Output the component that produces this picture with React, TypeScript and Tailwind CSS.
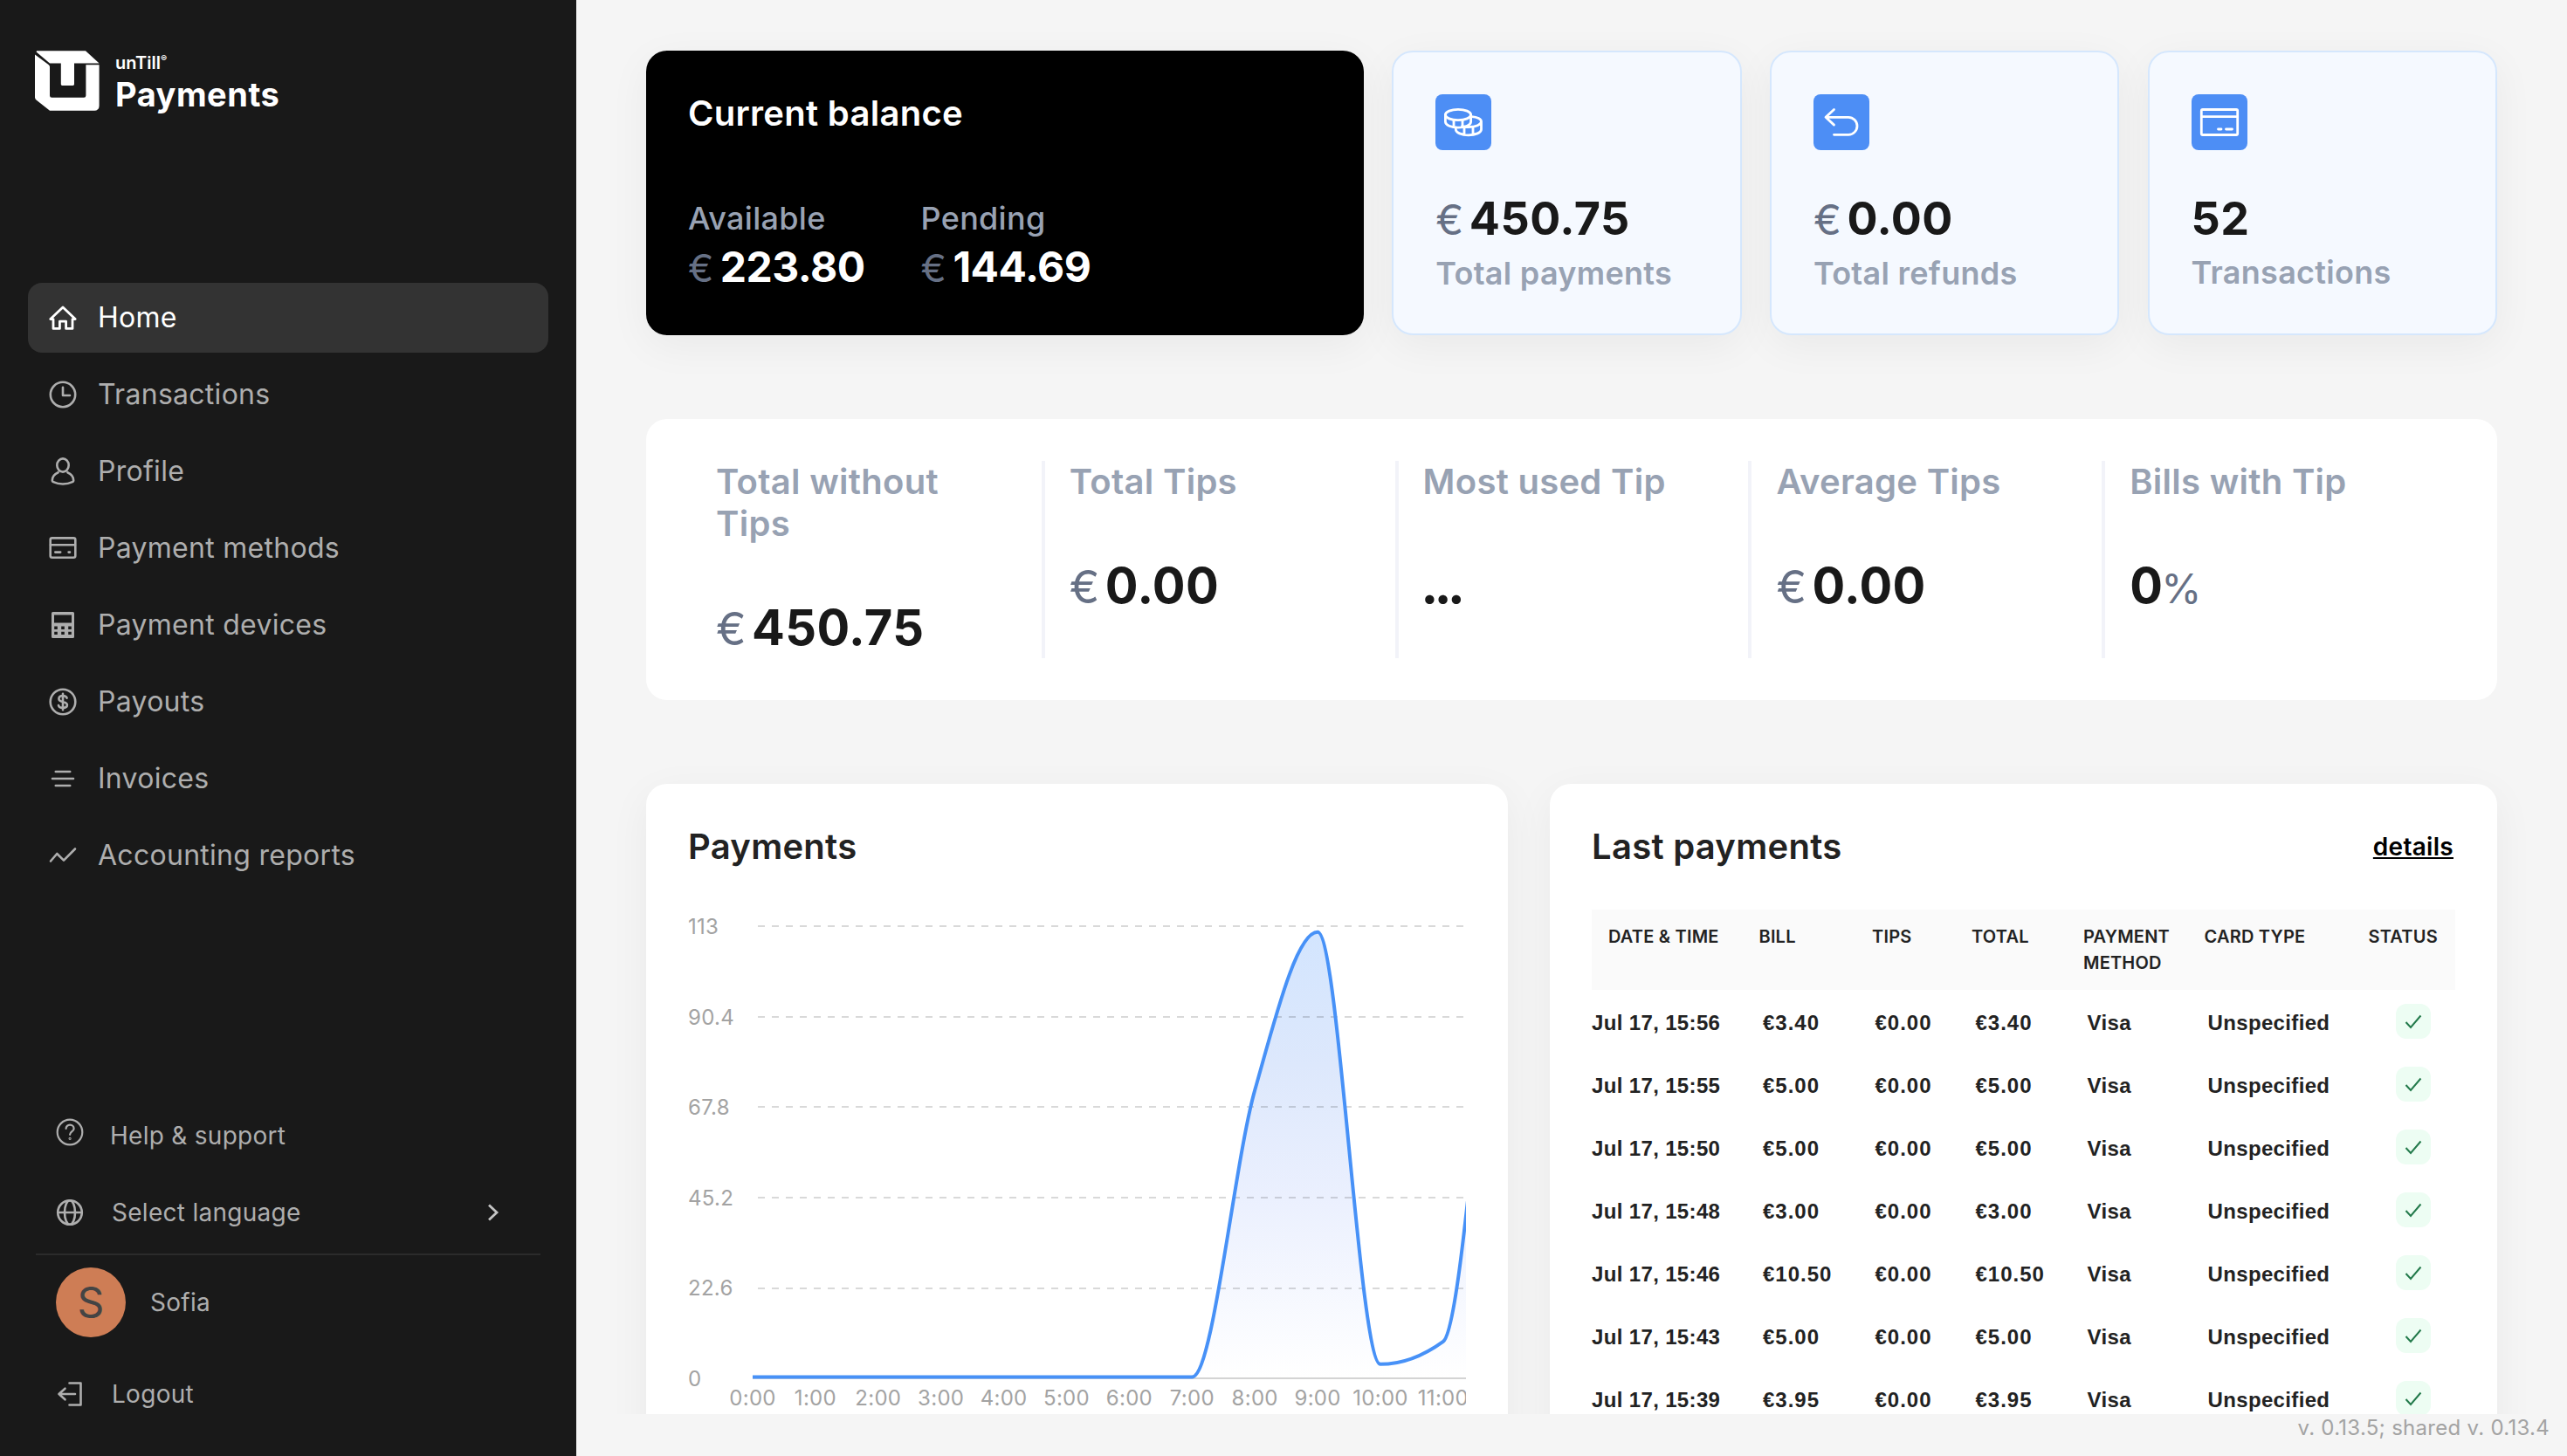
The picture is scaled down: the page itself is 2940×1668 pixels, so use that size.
import type { ReactNode } from 'react';

// ─────────────────────────────────────────────────────────────────────────────
// Data
// ─────────────────────────────────────────────────────────────────────────────

interface Payment {
  date: string;
  bill: string;
  tips: string;
  total: string;
}

const PAYMENTS: Payment[] = [
  { date: 'Jul 17, 15:56', bill: '€3.40', tips: '€0.00', total: '€3.40' },
  { date: 'Jul 17, 15:55', bill: '€5.00', tips: '€0.00', total: '€5.00' },
  { date: 'Jul 17, 15:50', bill: '€5.00', tips: '€0.00', total: '€5.00' },
  { date: 'Jul 17, 15:48', bill: '€3.00', tips: '€0.00', total: '€3.00' },
  { date: 'Jul 17, 15:46', bill: '€10.50', tips: '€0.00', total: '€10.50' },
  { date: 'Jul 17, 15:43', bill: '€5.00', tips: '€0.00', total: '€5.00' },
  { date: 'Jul 17, 15:39', bill: '€3.95', tips: '€0.00', total: '€3.95' },
];

// Turnover per hour, starting at midnight.
const HOURLY = [0, 0, 0, 0, 0, 0, 0, 0, 71.9, 111.5, 3.2, 8.9, 108, 60];
const Y_TICKS = [113, 90.4, 67.8, 45.2, 22.6, 0];

// ─────────────────────────────────────────────────────────────────────────────
// Icons
// ─────────────────────────────────────────────────────────────────────────────

function Icon({ children, width = 2.6 }: { children: ReactNode; width?: number }) {
  return (
    <svg
      className="size-8 shrink-0"
      viewBox="0 0 32 32"
      fill="none"
      stroke="currentColor"
      strokeWidth={width}
      strokeLinecap="round"
      strokeLinejoin="round"
    >
      {children}
    </svg>
  );
}

const HomeIcon = () => (
  <Icon width={2.8}>
    <path d="M16 4 1.8 17.6H5V28.4h7.4V20.2h7.2v8.2H27V17.6h3.2Z" />
  </Icon>
);

const ClockIcon = () => (
  <Icon>
    <circle cx="16" cy="16" r="14.2" />
    <path d="M16 7.8V17h8" />
  </Icon>
);

const UserIcon = () => (
  <Icon>
    <ellipse cx="16" cy="9" rx="6.7" ry="7.6" />
    <path d="M10.6 17.2C6.6 19 3.8 22.4 3.8 26.4c0 1 .5 1.400 1.300 1.800C11.500 31.300 20.500 31.300 26.900 28.200c.8-.4 1.300-.8 1.300-1.800 0-4-2.800-7.400-6.800-9.200" />
  </Icon>
);

const CardIcon = () => (
  <Icon>
    <rect x="1.7" y="4.4" width="28.6" height="22.4" rx="2" />
    <path d="M2 12.3h28M7.3 20.600h5.900M22.600 20.600h1.400" />
  </Icon>
);

const TerminalIcon = () => (
  <svg className="size-8 shrink-0" viewBox="0 0 32 32" fill="currentColor">
    <path
      fillRule="evenodd"
      d="M4.5 1h23A1.500 1.500 0 0 1 29 2.500v27a1.500 1.500 0 0 1-1.500 1.500h-23A1.500 1.500 0 0 1 3 29.500v-27A1.500 1.500 0 0 1 4.500 1ZM6 4.500v9h20v-9ZM6.200 17.500v3.400h3.600v-3.400Zm8 0v3.400h3.600v-3.400Zm8 0v3.400h3.600v-3.400Zm-16 6.200v3.400h3.600v-3.400Zm8 0v3.400h3.600v-3.400Zm8 0v3.400h3.600v-3.400Z"
    />
  </svg>
);

const DollarIcon = () => (
  <Icon>
    <circle cx="16" cy="16" r="14.3" />
    <path d="M16 6.8v18.4M20.600 11.700c-.5-1.700-2.200-2.700-4.600-2.700-2.700 0-4.600 1.300-4.600 3.400 0 2.300 2 3 4.600 3.600s4.900 1.300 4.900 3.600c0 2.200-2 3.400-4.900 3.400-2.700 0-4.600-1.100-5-3" />
  </Icon>
);

const LinesIcon = () => (
  <Icon>
    <path d="M7.8 8h16.400M4 16h24M7.800 24h16.400" />
  </Icon>
);

const TrendIcon = () => (
  <Icon>
    <path d="M2 22.5 9.300 14l7.700 7.700L30 8.500" />
  </Icon>
);

const HelpIcon = () => (
  <Icon width={2.2}>
    <circle cx="16" cy="16" r="14.3" />
    <path d="M11.6 12c0-2.500 2-4.400 4.500-4.400s4.500 1.800 4.500 4.300c0 3.300-4.500 3.300-4.500 6.900" />
    <circle cx="16.1" cy="23.3" r=".5" />
  </Icon>
);

const GlobeIcon = () => (
  <Icon>
    <circle cx="16" cy="16" r="13.8" />
    <ellipse cx="16" cy="16" rx="6" ry="13.8" />
    <path d="M2.5 16h27" />
  </Icon>
);

const LogoutIcon = () => (
  <Icon>
    <path d="M15.5 3.500h13v25h-13M3.500 16h18.500M10.500 9.700 3.500 16l7 6.300" />
  </Icon>
);

function IconTile({ children }: { children: ReactNode }) {
  return (
    <div className="size-16 rounded-lg bg-[#4d8ef5]">
      <svg
        className="size-16"
        viewBox="0 0 64 64"
        fill="none"
        stroke="white"
        strokeWidth="2.8"
        strokeLinecap="round"
        strokeLinejoin="round"
      >
        {children}
      </svg>
    </div>
  );
}

function Logo() {
  return (
    <svg className="h-[69px] w-[74px]" viewBox="0 0 74 69" fill="white">
      <path d="M2 .2h56L73.600 14.500H45v24a1.400 1.400 0 0 1-1.400 1.400H31.200a1.400 1.400 0 0 1-1.400-1.400v-24H17L1.600 1.600Z" />
      <path d="M0 4.500 15.500 16a3 3 0 0 1 1.500 2.800v32.700a2.300 2.300 0 0 0 2.300 2.300h36.800a2.300 2.300 0 0 0 2.300-2.300V16.300h15.200v47.200a5.300 5.300 0 0 1-5.300 5.300H17L1.500 56.500A4 4 0 0 1 0 53.500Z" />
    </svg>
  );
}

// ─────────────────────────────────────────────────────────────────────────────
// Sidebar
// ─────────────────────────────────────────────────────────────────────────────

const MENU = [
  { label: 'Home', icon: <HomeIcon />, active: true },
  { label: 'Transactions', icon: <ClockIcon /> },
  { label: 'Profile', icon: <UserIcon /> },
  { label: 'Payment methods', icon: <CardIcon /> },
  { label: 'Payment devices', icon: <TerminalIcon /> },
  { label: 'Payouts', icon: <DollarIcon /> },
  { label: 'Invoices', icon: <LinesIcon /> },
  { label: 'Accounting reports', icon: <TrendIcon /> },
];

function Sidebar() {
  return (
    <aside className="flex w-[660px] shrink-0 flex-col bg-[#191919] text-[#aeaeae]">
      <div className="flex h-[324px] items-start gap-[18px] pt-[58px] pl-10 text-white">
        <Logo />
        <div className="pt-0.5">
          <div className="flex h-6 text-[20px] leading-6 font-semibold tracking-normal">
            unTill<span className="text-[8px] leading-3">©</span>
          </div>
          <div className="-mt-px text-[38px] leading-[50px] font-bold tracking-[0.5px]">Payments</div>
        </div>
      </div>

      <nav className="flex flex-col gap-2 px-8">
        {MENU.map((item) => (
          <a
            key={item.label}
            className={
              item.active
                ? 'flex h-20 items-center gap-6 rounded-2xl bg-[#333333] pl-6 text-[32px] text-white'
                : 'flex h-20 items-center gap-6 pl-6 text-[32px]'
            }
          >
            {item.icon}
            {item.label}
          </a>
        ))}
      </nav>

      <div className="mt-auto pb-[27px] text-[28px]">
        <div className="flex h-[88px] items-center gap-[30px] pl-16">
          <div className="-mt-1.5">
            <HelpIcon />
          </div>
          <span className="pt-0.5">Help &amp; support</span>
        </div>
        <div className="flex h-[92px] items-center gap-8 pr-[86px] pb-0.5 pl-16">
          <GlobeIcon />
          <span>Select language</span>
          <svg className="ml-auto h-5 w-4" viewBox="0 0 16 20" fill="none" stroke="#c4c4c4" strokeWidth="2.8">
            <path d="m2 1.500 9 8.500-9 8.500" />
          </svg>
        </div>
        <div className="mx-[41px] h-0.5 bg-[#2b2b2b]" />
        <div className="flex items-center gap-7 pt-3.5 pl-16">
          <div className="flex size-20 items-center justify-center rounded-full bg-[#ce7d55] text-[48px] text-[#444444]">
            S
          </div>
          Sofia
        </div>
        <div className="mt-[21px] flex h-[88px] items-center gap-8 pl-16">
          <LogoutIcon />
          Logout
        </div>
      </div>
    </aside>
  );
}

// ─────────────────────────────────────────────────────────────────────────────
// Summary cards
// ─────────────────────────────────────────────────────────────────────────────

function BalanceItem({ label, amount }: { label: string; amount: string }) {
  return (
    <div>
      <div className="text-[36px] leading-[56px] font-medium text-[#98a2b3]">{label}</div>
      <div className="text-[48px] leading-[56px] font-bold tracking-[-0.5px] text-white">
        <span className="mr-2 text-[44px] font-normal text-[#667085]">€</span>
        {amount}
      </div>
    </div>
  );
}

interface SummaryCardProps {
  icon: ReactNode;
  value: string;
  label: string;
  currency?: boolean;
}

function SummaryCard({ icon, value, label, currency }: SummaryCardProps) {
  return (
    <div className="h-[326px] rounded-3xl border-2 border-[#d5e7fd] bg-[#f5f9ff] p-12 shadow-[0_12px_48px_rgba(0,0,0,0.05)]">
      <IconTile>{icon}</IconTile>
      <div className="mt-12 text-[52px] leading-[62px] font-bold tracking-[0.5px] text-[#191919]">
        {currency && <span className="mr-[6px] text-[48px] font-normal text-[#667085]">€</span>}
        {value}
      </div>
      <div className="text-[36px] leading-[61px] font-semibold text-[#98a2b3]">{label}</div>
    </div>
  );
}

function Summary() {
  return (
    <section className="grid grid-cols-[822px_400.4px_400.4px_400.4px] justify-between">
      <div className="h-[326px] rounded-3xl bg-black p-12 shadow-[0_12px_48px_rgba(0,0,0,0.05)]">
        <h2 className="text-[40px] leading-[48px] font-semibold text-white">Current balance</h2>
        <div className="mt-[68px] flex gap-16">
          <BalanceItem label="Available" amount="223.80" />
          <BalanceItem label="Pending" amount="144.69" />
        </div>
      </div>
      <SummaryCard
        currency
        value="450.75"
        label="Total payments"
        icon={
          <>
            <ellipse cx="26" cy="23.5" rx="14.6" ry="6.2" />
            <path d="M11.4 23.500v8c0 3.600 6.500 6.600 14.600 6.600s14.600-3 14.600-6.600v-8M21 30v7.500M31 30v7.500" />
            <path d="M41.5 25.600c6.500.4 11 2.700 11 5.700 0 3.500-6.500 6.200-14.500 6.200-3 0-5.500-.3-7.500-.9M52.500 31.300v9c0 3.600-6.500 6.500-14.600 6.500s-14.600-2.900-14.600-6.500v-2.500M33 38v8M43 38v8" />
          </>
        }
      />
      <SummaryCard
        currency
        value="0.00"
        label="Total refunds"
        icon={<path d="M23.5 17.500 14 26.300l9.500 8.800M14.500 26.300H40a10 10 0 0 1 0 20H23.500" />}
      />
      <SummaryCard
        value="52"
        label="Transactions"
        icon={
          <>
            <rect x="11.3" y="17.5" width="41.4" height="29" rx="1.5" />
            <path d="M11.5 25.700h41M30.500 40h3.500M39.500 40h7" />
          </>
        }
      />
    </section>
  );
}

// ─────────────────────────────────────────────────────────────────────────────
// Tips statistics
// ─────────────────────────────────────────────────────────────────────────────

const TIPS = [
  { title: 'Total without Tips', value: '450.75', prefix: '€' },
  { title: 'Total Tips', value: '0.00', prefix: '€' },
  { title: 'Most used Tip', value: '...' },
  { title: 'Average Tips', value: '0.00', prefix: '€' },
  { title: 'Bills with Tip', value: '0', suffix: '%' },
];

function TipsStats() {
  return (
    <section className="mt-24 grid h-[322px] grid-cols-5 rounded-3xl bg-white p-12">
      {TIPS.map((tip) => (
        <div
          key={tip.title}
          className="border-l-4 border-[#f2f3f9] pr-10 pl-7 first:border-transparent"
        >
          <div className="text-[40px] leading-[48px] font-semibold text-[#98a2b3]">{tip.title}</div>
          <div className="mt-16 text-[56px] leading-[62px] font-bold tracking-[0.4px] text-[#191919]">
            {tip.prefix && (
              <span className="mr-[6px] text-[52px] font-normal text-[#667085]">{tip.prefix}</span>
            )}
            <span className={tip.value === '...' ? '-ml-0.5 font-extrabold tracking-[-4.5px]' : ''}>
              {tip.value}
            </span>
            {tip.suffix && (
              <span className="-ml-0.5 text-[47px] font-normal text-[#667085]">{tip.suffix}</span>
            )}
          </div>
        </div>
      ))}
    </section>
  );
}

// ─────────────────────────────────────────────────────────────────────────────
// Payments chart
// ─────────────────────────────────────────────────────────────────────────────

const X0 = 74;
const STEP = 71.9;
const BASE = 535.5;
const PLOT_H = 516.5;

// Monotone cubic through evenly spaced points, so the line never overshoots.
function monotonePath(ys: number[]) {
  const secants = ys.slice(1).map((y, i) => y - ys[i]);
  const slopes = ys.map((_, i) => {
    const a = secants[i - 1];
    const b = secants[i];
    if (a === undefined || b === undefined || a * b <= 0) return 0;
    return Math.sign(a) * 2 * Math.min(Math.abs(a), Math.abs(b), Math.abs(a + b) / 4);
  });
  let d = `M${X0} ${ys[0]}`;
  for (let i = 1; i < ys.length; i++) {
    const x = X0 + i * STEP;
    d += `C${x - (STEP * 2) / 3} ${ys[i - 1] + slopes[i - 1] / 3} ${x - STEP / 3} ${ys[i] - slopes[i] / 3} ${x} ${ys[i]}`;
  }
  return d;
}

function PaymentsChart() {
  const line = monotonePath(HOURLY.map((v) => BASE - (v / 113) * PLOT_H));
  const endX = X0 + (HOURLY.length - 1) * STEP;

  return (
    <svg className="mt-12 h-[578px] w-[891px] overflow-hidden" viewBox="0 0 891 578">
      <defs>
        <linearGradient id="area" x1="0" y1="0" x2="0" y2="1">
          <stop offset="0" stopColor="#d3e5fe" />
          <stop offset="0.3" stopColor="#dde8fc" />
          <stop offset="0.6" stopColor="#ebf0fe" />
          <stop offset="1" stopColor="#ffffff" />
        </linearGradient>
      </defs>
      <g fill="#a3a3a3" fontSize="24">
        {Y_TICKS.map((tick, i) => (
          <text key={tick} x="0" y={28 + i * 103.6}>
            {tick}
          </text>
        ))}
        {HOURLY.slice(0, 12).map((_, hour) => (
          <text key={hour} x={X0 + hour * STEP} y="568" textAnchor="middle">
            {hour}:00
          </text>
        ))}
      </g>
      <path d={`M${X0} 537H891`} stroke="#d4d4d4" strokeWidth="2" />
      <path d={`${line}L${endX} ${BASE}H${X0}Z`} fill="url(#area)" />
      <g stroke="#000000" strokeOpacity="0.15" strokeWidth="2" strokeDasharray="8 8">
        <path d="M80 19H891M80 123H891M80 226H891M80 330H891M80 434H891" />
      </g>
      <path d={line} fill="none" stroke="#4791f7" strokeWidth="4" strokeLinejoin="bevel" />
    </svg>
  );
}

// ─────────────────────────────────────────────────────────────────────────────
// Last payments
// ─────────────────────────────────────────────────────────────────────────────

function LastPayments() {
  return (
    <div className="h-[800px] rounded-3xl bg-white p-12 shadow-[0_12px_48px_rgba(0,0,0,0.05)]">
      <div className="flex items-center justify-between pr-0.5">
        <h2 className="text-[40px] leading-[48px] font-semibold text-[#222222]">Last payments</h2>
        <a className="text-[28px] leading-[48px] font-semibold text-black underline">details</a>
      </div>
      <div className="mt-12 grid h-[92px] grid-cols-[172.5px_129.5px_114px_128px_138.5px_188px_auto] justify-start bg-[#fafafa] pt-4 pl-[19px] text-[20px] leading-[30px] font-semibold tracking-[0.2px] text-[#222222]">
        <span>DATE &amp; TIME</span>
        <span>BILL</span>
        <span>TIPS</span>
        <span>TOTAL</span>
        <span className="w-[110px]">PAYMENT METHOD</span>
        <span>CARD TYPE</span>
        <span>STATUS</span>
      </div>
      {PAYMENTS.map((p) => (
        <div
          key={p.date}
          className="grid h-[72px] grid-cols-[196px_128.5px_115px_128px_138px_215.5px_40px] items-center font-['Liberation_Sans',Arial,sans-serif] text-[24px] font-bold tracking-[0.35px] text-[#222222]"
        >
          <span className="pt-1">{p.date}</span>
          <span className="pt-1 tracking-[1px]">{p.bill}</span>
          <span className="pt-1 tracking-[1px]">{p.tips}</span>
          <span className="pt-1 tracking-[1px]">{p.total}</span>
          <span className="pt-1">Visa</span>
          <span className="pt-1">Unspecified</span>
          <div className="flex size-10 items-center justify-center rounded-xl bg-[#edfdf3]">
            <svg className="size-5" viewBox="0 0 20 20" fill="none" stroke="#237a4b" strokeWidth="2">
              <path d="m1.500 11 5.500 6L18.500 3.500" />
            </svg>
          </div>
        </div>
      ))}
    </div>
  );
}

export default function App() {
  return (
    <div className="flex h-[1668px] w-[2940px] overflow-hidden bg-[#f5f5f5] font-['Inter',sans-serif] tracking-[0.28px]">
      <Sidebar />
      <main className="flex flex-1 flex-col">
        <div className="h-[1620px] overflow-hidden px-20 pt-[58px]">
          <Summary />
          <TipsStats />
          <section className="mt-24 grid grid-cols-[987px_1085px] justify-between">
            <div className="h-[800px] rounded-3xl bg-white p-12 shadow-[0_12px_48px_rgba(0,0,0,0.05)]">
              <h2 className="text-[40px] leading-[48px] font-semibold text-[#222222]">Payments</h2>
              <PaymentsChart />
            </div>
            <LastPayments />
          </section>
        </div>
        <footer className="pr-5 text-right text-[24px] leading-8 text-[#a3a3a3]">
          v. 0.13.5; shared v. 0.13.4
        </footer>
      </main>
    </div>
  );
}
